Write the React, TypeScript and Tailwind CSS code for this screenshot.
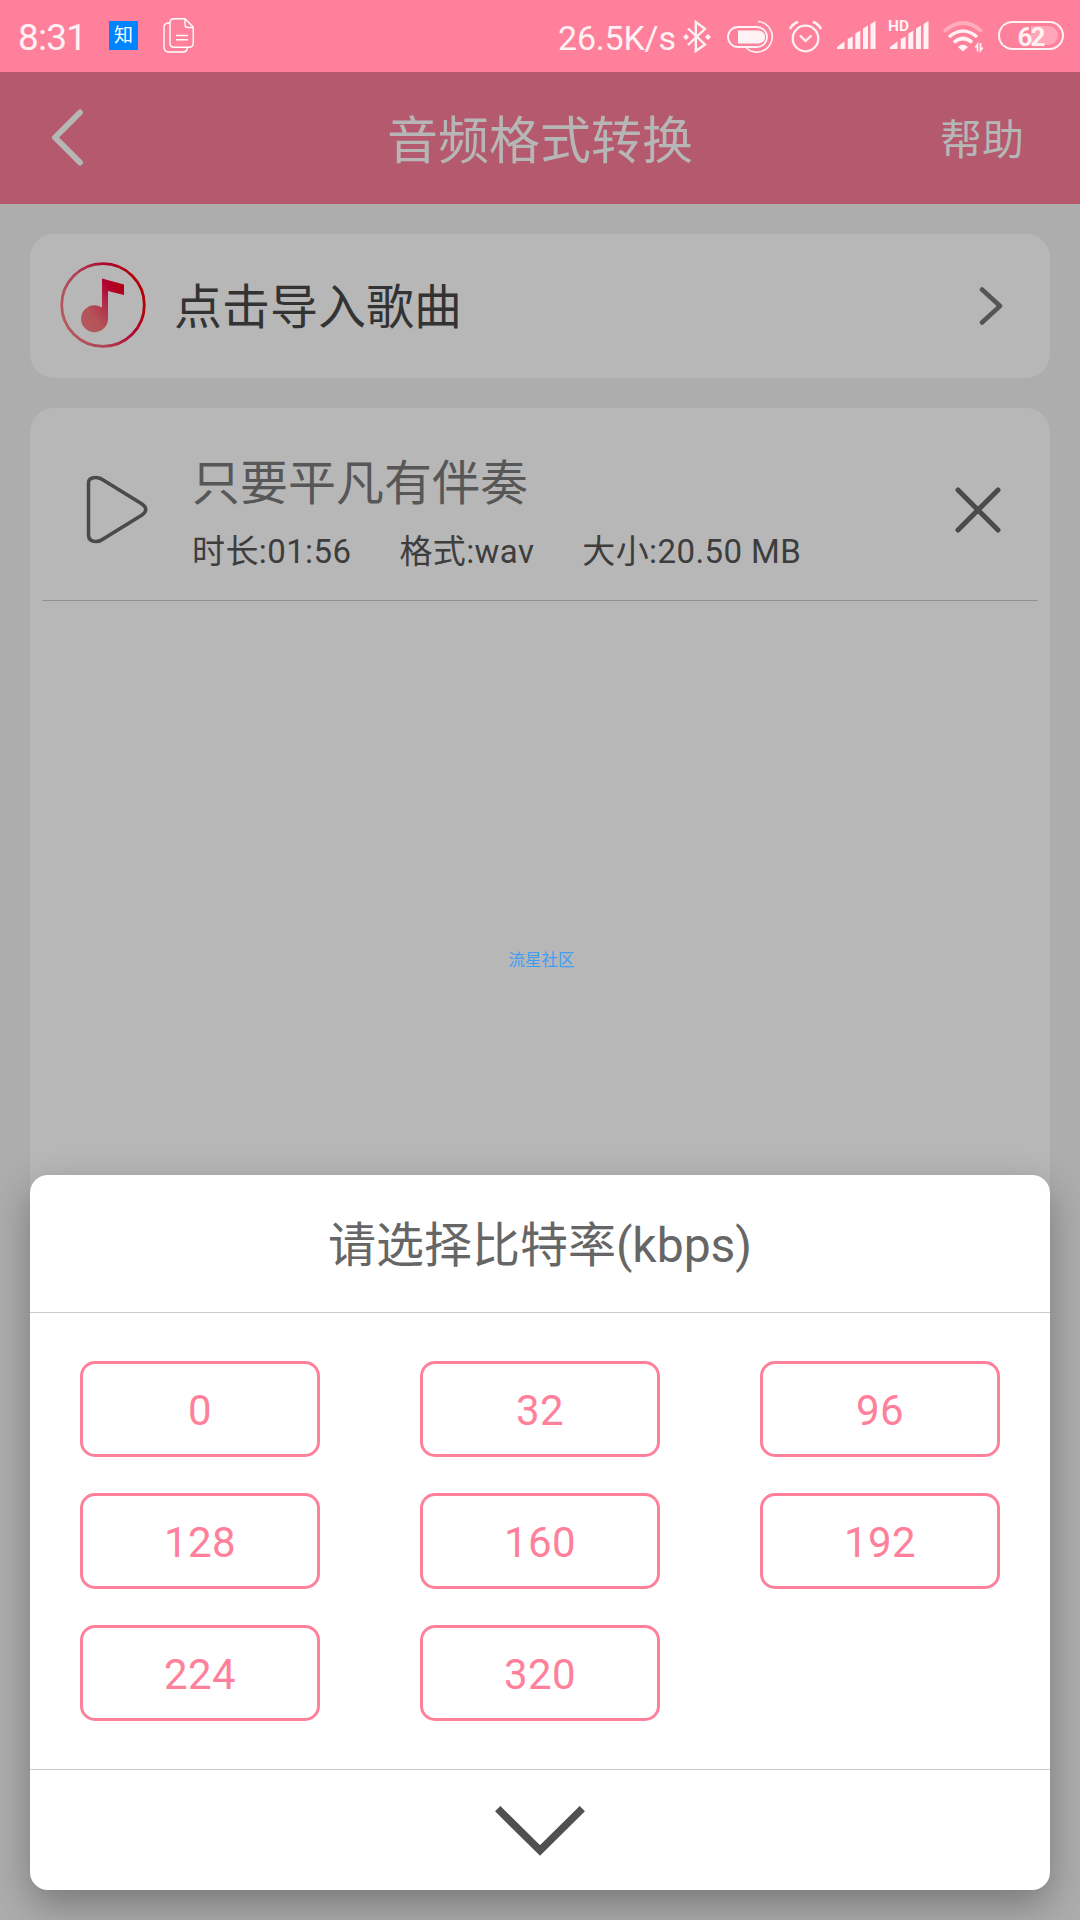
import React, { useState } from "react";

type SongProps = {
    nama: string;
    durasi: string;
    format: string;
    ukuran: string;
};

const bitrates = ["0", "32", "96", "128", "160", "192", "224", "320"];

const song: SongProps = {
    nama: "只要平凡有伴奏",
    durasi: "01:56",
    format: "wav",
    ukuran: "20.50 MB",
};

function SignalBars() {
    return (
        <g fill="#fff1f4">
            <path d="M0 28V26L7.500 20.500V28Z" />
            <path d="M10.700 18L15.700 15.500V28H10.700Z" />
            <path d="M18.300 12.500L23.300 9.500V28H18.300Z" />
            <path d="M26 7.500L31 4.500V28H26Z" />
            <path d="M33.500 3L38.500 0V28H33.500Z" />
        </g>
    );
}

function StatusBar() {
    return (
        <div className="flex h-[72px] items-start bg-[#ff809a] text-[#fff1f4]">
            <span className="ml-[18px] mt-[17px] w-[91px] text-[37px] leading-[42px] tracking-[-0.8px]">8:31</span>
            <div className="mt-[21px] flex h-[29px] w-[29px] items-center justify-center bg-[#0084ff] text-[19px] leading-none text-white">
                知
            </div>
            <svg className="ml-[25px] mt-[18px]" width="31" height="35" fill="none" stroke="#fff" strokeWidth="1.4">
                <path d="M7 5H5Q1 5.500 1 9V29Q1 34 6 34H20Q23.500 34 24.500 30" />
                <path d="M11 .8H22L30.200 9V25Q30.200 29.300 26 29.300H11Q7 29.300 7 25V5Q7 .8 11 .8Z" />
                <path d="M22 1V7Q22 9.500 25 9.500H30M13 17.500H25M13 21.700H25" />
            </svg>
            <span className="ml-auto mt-[19px] w-[125px] text-[34px] leading-[39px] tracking-[-0.2px]">26.5K/s</span>
            {/* bluetooth */}
            <svg className="mt-[20px]" width="28" height="33" fill="none" stroke="#fff1f4" strokeWidth="2.400">
                <path d="M5 8.500L22 24.500L12.800 31V2L22 8.800L5 25" />
                <path d="M0 17L3 14L6 17L3 20ZM22 17L25 14L28 17L25 20Z" fill="#fff1f4" stroke="none" />
            </svg>
            {/* headset battery */}
            <svg className="ml-[16px] mt-[20px]" width="48" height="34" fill="none" stroke="#fff1f4">
                <rect x="1" y="7" width="39" height="20" rx="10" strokeWidth="1.800" />
                <path d="M11 10.500H32Q38 11.500 38 17Q38 22.500 32 23.500H11Z" fill="#fff1f4" stroke="none" />
                <path d="M31 1.500A15.300 15.300 0 1 1 19 27.500" strokeWidth="1.600" />
            </svg>
            {/* alarm */}
            <svg className="ml-[14px] mt-[20px]" width="33" height="33" fill="none" stroke="#fff1f4" strokeWidth="2.300">
                <circle cx="16.500" cy="18.500" r="12.800" />
                <path d="M11 15.500L16.500 21L22.500 15.500" />
                <path d="M1 9Q3 4.500 9 1.800M32 9Q30 4.500 24 1.800" strokeWidth="2.600" />
            </svg>
            <svg className="ml-[15px] mt-[21px]" width="39" height="29">
                <SignalBars />
            </svg>
            <div className="relative ml-[14px] mt-[21px] h-[29px] w-[39px]">
                <svg width="39" height="29">
                    <SignalBars />
                </svg>
                <span className="absolute -left-[2px] -top-[4px] h-[15px] bg-[#ff809a] text-[15.500px] font-bold leading-[18px]">HD</span>
            </div>
            <svg className="ml-[14px] mt-[21px]" width="41" height="32" fill="none" stroke="#fff1f4" strokeWidth="3.600">
                <path d="M1 10.500Q20 -6.500 39 10.500" opacity=".4" />
                <path d="M6 16Q20 4 34 16" />
                <path d="M11 21.500Q20 13.500 29 21.500" />
                <path d="M15 26Q20 21.500 25 26L20.500 30H19.500Z" fill="#fff1f4" stroke="none" />
                <path d="M32.300 26.500L34.500 23.500V30.500M37.500 22V29.500L39.700 26.500" strokeWidth="1.700" />
            </svg>
            <div className="ml-[14px] mr-[16px] mt-[21px] flex h-[29px] w-[66px] rounded-full border-[2.500px] border-[#fff1f4] p-[3px]">
                <div className="flex h-full w-[55px] items-center justify-center rounded-r-full bg-linear-to-r from-[#ff809a] from-50% to-[#ffa6b8] to-50% pt-[2px] text-[26px] font-bold leading-none tracking-[-2px]">
                    62
                </div>
            </div>
        </div>
    );
}

function Header() {
    return (
        <div className="grid h-[132px] grid-cols-[200px_1fr_200px] items-center bg-[#b5596e] text-[#b6b6b6]">
            <svg className="ml-[51px]" width="34" height="58" fill="none" stroke="#b6b6b6" strokeWidth="6" strokeLinecap="round" strokeLinejoin="round">
                <path d="M29 3.500L4 28.500L29 53.500" />
            </svg>
            <h1 className="pt-[7px] text-center text-[51px] leading-[60px]">音频格式转换</h1>
            <span className="mr-[56px] pt-[6px] text-right text-[42px] leading-[50px]">帮助</span>
        </div>
    );
}

function MusicIcon() {
    return (
        <svg className="-mt-[2px]" width="86" height="86" viewBox="0 0 86 86">
            <defs>
                <linearGradient id="ring" x1="0" y1=".75" x2="1" y2=".35">
                    <stop offset="0" stopColor="#b65b5e" />
                    <stop offset=".35" stopColor="#b04257" />
                    <stop offset=".75" stopColor="#b0002c" />
                    <stop offset="1" stopColor="#b40000" />
                </linearGradient>
                <linearGradient id="note" x1="0" y1="1" x2="1" y2="0">
                    <stop offset="0" stopColor="#b55c5e" />
                    <stop offset=".3" stopColor="#b45258" />
                    <stop offset=".55" stopColor="#b22a4a" />
                    <stop offset=".75" stopColor="#b1002b" />
                    <stop offset="1" stopColor="#b60008" />
                </linearGradient>
            </defs>
            <circle cx="43" cy="43" r="41.300" fill="none" stroke="url(#ring)" strokeWidth="2.800" />
            <path d="M42 16.500L64 22.500V33L48 29V57A13.500 13.500 0 1 1 42 45.500Z" fill="url(#note)" />
        </svg>
    );
}

function ImportCard() {
    return (
        <div className="flex h-36 items-center rounded-3xl bg-[#b7b7b7] pl-[30px] pr-[47px] text-[#333333]">
            <MusicIcon />
            <span className="ml-[28px] flex-1 pt-[4px] text-[48px] leading-[58px]">点击导入歌曲</span>
            <svg width="24" height="40" fill="none" stroke="#555555" strokeWidth="4.500" strokeLinecap="round" strokeLinejoin="round">
                <path d="M3 3.500L21 20L3 36.500" />
            </svg>
        </div>
    );
}

function SongCard(props: SongProps) {
    return (
        <div className="h-[800px] rounded-t-3xl bg-[#b7b7b7] px-3">
            <div className="flex h-[193px] items-start border-b border-[#919191]">
                <svg className="ml-[44px] mt-[66px]" width="63" height="70" fill="none" stroke="#4a4a4a" strokeWidth="3.500">
                    <path d="M2.500 9Q2.500 3.500 10 3.500Q14 3.500 18 6.500L56 30Q63.500 35.500 56 41L18 64.500Q14 67.500 10 67.500Q2.500 67.500 2.500 61Z" />
                </svg>
                <div className="ml-[43px] mt-[44px] flex-1">
                    <h2 className="text-[48px] leading-[64px] text-[#575757]">{props.nama}</h2>
                    <div className="mt-[12px] flex gap-[48px] text-[33px] leading-[48px] tracking-[0.4px] text-[#3d3d3d]">
                        <span>时长:{props.durasi}</span>
                        <span>格式:{props.format}</span>
                        <span>大小:{props.ukuran}</span>
                    </div>
                </div>
                <svg className="mr-[37px] mt-[79px]" width="46" height="46" stroke="#4a4a4a" strokeWidth="5" strokeLinecap="round">
                    <path d="M3 3L43 43M43 3L3 43" />
                </svg>
            </div>
        </div>
    );
}

function BitrateModal({ onSelect }: { onSelect: (v: string) => void }) {
    return (
        <div className="absolute inset-x-[30px] bottom-[30px] h-[715px] rounded-[18px] bg-white shadow-[0_15px_38px_rgba(0,0,0,0.3)]">
            <div className="flex h-[138px] items-center justify-center border-b border-[#cccccc] pt-[5px] text-[48px] text-[#666666]">
                请选择比特率(kbps)
            </div>
            <div className="grid h-[457px] grid-cols-3 content-start gap-x-[100px] gap-y-9 border-b border-[#cccccc] px-[50px] pt-12">
                {bitrates.map((e) => (
                    <button
                        key={e}
                        className="h-24 rounded-[15px] border-3 border-[#ff809a] pt-[3px] text-[42px] tracking-[0.4px] text-[#ff809a]"
                        onClick={() => onSelect(e)}
                    >
                        {e}
                    </button>
                ))}
            </div>
            <div className="flex justify-center pt-9">
                <svg width="90" height="51" fill="none" stroke="#505050" strokeWidth="7.500">
                    <path d="M2.700 2.700L45 44.500L87.300 2.700" />
                </svg>
            </div>
        </div>
    );
}

export default function App() {
    const [, setBitrate] = useState("");
    return (
        <div className="relative h-[1920px] w-[1080px] overflow-hidden bg-[#adadad] font-['Roboto','Noto_Sans_CJK_SC',sans-serif]">
            <StatusBar />
            <Header />
            <div className="flex flex-col gap-[30px] px-[30px] pt-[30px]">
                <ImportCard />
                <SongCard {...song} />
            </div>
            {/* toast */}
            <span className="absolute inset-x-0 top-[950px] pl-[3px] text-center text-[16.500px] leading-[22px] text-[#3f9df5]">流星社区</span>
            <BitrateModal onSelect={setBitrate} />
        </div>
    );
}
